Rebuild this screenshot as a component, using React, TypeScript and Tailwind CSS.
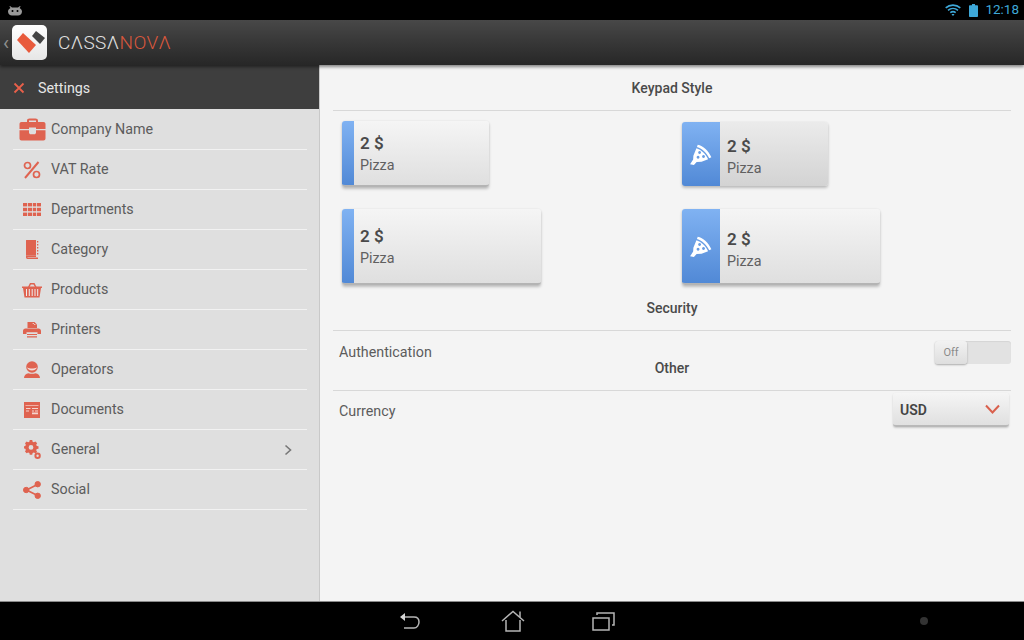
import React from 'react'

const menu = [
  { label: 'Company Name', icon: 'briefcase' },
  { label: 'VAT Rate', icon: 'percent' },
  { label: 'Departments', icon: 'grid' },
  { label: 'Category', icon: 'book' },
  { label: 'Products', icon: 'basket' },
  { label: 'Printers', icon: 'printer' },
  { label: 'Operators', icon: 'operator' },
  { label: 'Documents', icon: 'document' },
  { label: 'General', icon: 'gears', more: true },
  { label: 'Social', icon: 'social' },
]

const MenuIcon = ({ name }: { name: string }) => {
  const c = '#df6350'
  if (name === 'briefcase')
    return (
      <svg width="27" height="23" viewBox="0 0 27 23" fill={c}>
        <path d="M8 4.500V2.800C8 1.300 9 .5 10.500 .5h6C18 .5 19 1.300 19 2.800V4.500h-2V2.500H10v2z" />
        <path d="M2.500 4h22c1.200 0 2 .8 2 2v5H17V9.500H10V11H.5V6c0-1.200.8-2 2-2z" />
        <path d="M.5 12.300H10V15l1 1.300h5L17 15v-2.700h9.500V20.500c0 1.200-.8 2-2 2h-22c-1.200 0-2-.8-2-2z" />
      </svg>
    )
  if (name === 'percent')
    return (
      <svg width="18" height="18" viewBox="0 0 18 18" fill="none" stroke={c} strokeWidth="1.700">
        <path d="M15.500 1 2 17" strokeWidth="2" />
        <circle cx="4.500" cy="4.500" r="3" />
        <circle cx="13.500" cy="13.500" r="3" />
      </svg>
    )
  if (name === 'grid')
    return (
      <svg width="18" height="13" viewBox="0 0 18 13" fill={c}>
        {[0, 4.800, 9.600].map((y) =>
          [0, 5, 10, 14].map((x) => <rect key={`${x}-${y}`} x={x} y={y} width={x === 14 ? 4 : x === 10 ? 3.200 : 4.200} height="3.400" />),
        )}
      </svg>
    )
  if (name === 'book')
    return (
      <svg width="14" height="19" viewBox="0 0 14 19" fill={c}>
        <path d="M1.500 0H11v15.500H2.200c-.7 0-1.200.4-1.200.9V1C1 .5 1 0 1.500 0z" />
        <path d="M1 16.300c0-.5.5-.7 1.200-.7H11V17H2.500v.4H13V19H2.500C1.500 19 1 18 1 17z" />
        <path d="M12 1h1.300v1.500H12zM12 4h1.300v1.500H12zM12 7h1.300v1.500H12zM12 10h1.300v1.500H12zM12 13h1.300v1.500H12z" />
      </svg>
    )
  if (name === 'basket')
    return (
      <svg width="20" height="16" viewBox="0 0 20 16" fill={c}>
        <path d="M6 5 8 1h4.500l2 4h-1.500l-1.500-2.600H8.900L7.500 5z" />
        <path d="M0 4.500h20V6h-1l-1.500 9.500h-15L1 6H0z" />
        <path d="M4.500 7v7M7.300 7v7M10.200 7v7M13 7v7M15.700 7v7" stroke="#eeeeee" strokeWidth="1" />
      </svg>
    )
  if (name === 'printer')
    return (
      <svg width="18" height="16" viewBox="0 0 18 16" fill={c}>
        <path d="M5 0h6.500L14 2.500V6H4.500V.5z" />
        <path d="M9 1h2v2h2z" fill="#eeeeee" />
        <path d="M2.500 6.500h13c1.500 0 2.500 1 2.500 2.500v3h-3.500v-1.800h-11V12H0V9c0-1.500 1-2.500 2.500-2.500z" />
        <path d="M4 12h10v1H4zM4 14.300h10V15.600H4z" />
      </svg>
    )
  if (name === 'operator')
    return (
      <svg width="16" height="17" viewBox="0 0 16 17" fill={c}>
        <circle cx="8" cy="6" r="5.800" />
        <path d="M3 6.300c1.600 1 3.200 1.300 5 1.300s3.400-.3 5-1.300c-.4 2-2.600 3.200-5 3.200S3.400 8.300 3 6.300z" fill="#f6dcd7" />
        <path d="M0 17c0-2.700 2-4.300 4.500-4.800 2 .7 5 .7 7 0 2.500.5 4.500 2.100 4.500 4.800z" />
      </svg>
    )
  if (name === 'document')
    return (
      <svg width="16" height="16" viewBox="0 0 16 16" fill={c}>
        <path d="M0 0h16v16H0z" />
        <path d="M1.500 3h13v.8h-13z" fill="#f3c4bb" />
        <path d="M2 6h4.500v1H2zM2 8.500h3v1H2zM8 6h6v1H8zM8 8.500h2v1H8zM11 8.500h3v1h-3zM8 10.500h6v1.800H8z" fill="#f5d5cf" />
      </svg>
    )
  if (name === 'gears')
    return (
      <svg width="17" height="19" viewBox="0 0 17 19" fill={c}>
        <path
          fillRule="evenodd"
          d="M5 0h2.600l.4 1.800 1.300.6L11 1.500l1.800 1.800-1 1.600.6 1.300 1.800.4v2.600l-1.800.4-.6 1.300 1 1.600L11 14l-1.700-.9-1.300.6-.4 1.800H5l-.4-1.800-1.300-.6-1.600.9L0 12.200l.9-1.600-.6-1.300L-1 8.900V6.600l1.300-.4.6-1.300-.9-1.600L1.700 1.500l1.600.9 1.300-.6zM6.300 5.300a2.500 2.500 0 1 0 0 5 2.500 2.500 0 0 0 0-5z"
          transform="translate(1 0) scale(.95)"
        />
        <path
          fillRule="evenodd"
          d="M13.600 12.500a3.200 3.200 0 1 1 0 6.400 3.200 3.200 0 0 1 0-6.400zm0 2a1.200 1.200 0 1 0 0 2.400 1.200 1.200 0 0 0 0-2.400z"
        />
      </svg>
    )
  return (
    <svg width="18" height="18" viewBox="0 0 18 18" fill={c} stroke={c}>
      <path d="M14.500 3.500 3.500 9l11 5.500" fill="none" strokeWidth="1.700" />
      <circle cx="14.700" cy="3.200" r="2.700" />
      <circle cx="3.200" cy="9" r="2.700" />
      <circle cx="14.700" cy="14.800" r="2.700" />
    </svg>
  )
}

const PizzaIcon = () => (
  <svg width="24" height="24" viewBox="0 0 22 22" fill="#ffffff">
    <path d="M8 2.500C13 3.500 18 8 20.500 14l-2 1C16.500 10.500 12.500 6 7.300 4.600z" />
    <path
      fillRule="evenodd"
      d="M6.800 5.800C11 7 15.500 11 17.500 15.800l-6 2.200-4.500.3-2.500 2.700L1 20.500l2.800-4.500.2-3.500zM9.700 8.300a1.300 1.300 0 1 0 .01 0zM13.300 12a1.300 1.300 0 1 0 .01 0zM8.300 12.700a1.300 1.300 0 1 0 .01 0z"
    />
  </svg>
)

const KeyCard = ({ wide, icon, flat }: { wide?: boolean; icon?: boolean; flat?: boolean }) => (
  <div
    className={`flex overflow-hidden rounded-[3px] shadow-[0_2px_3px_rgba(0,0,0,0.22),0_0_2px_rgba(0,0,0,0.08)] ${
      flat
        ? 'bg-gradient-to-b from-[#ebebeb] to-[#d3d3d3]'
        : 'border-b-2 border-[#b4b4b4] bg-gradient-to-b from-[#f5f5f5] to-[#dfdfdf]'
    } ${wide ? 'h-[76px]' : icon ? 'h-[64px]' : 'h-[66px]'} ${wide ? (icon ? 'w-[198px]' : 'w-[199px]') : icon ? 'w-[146px]' : 'w-[147px]'}`}
  >
    <div
      className={`flex shrink-0 items-center justify-center bg-gradient-to-b from-[#80b2f2] to-[#5189d6] ${
        icon ? 'w-[38px]' : 'w-[12px]'
      }`}
    >
      {icon && <PizzaIcon />}
    </div>
    <div className={`flex flex-col justify-center ${flat ? 'pl-[7px] pt-[6px]' : icon ? 'pl-[7px] pt-[8px]' : 'pl-[6px] pt-[2px]'}`}>
      <div className="text-[17px] leading-[22px] font-semibold text-[#4a4a4a]">2 $</div>
      <div className="text-[14.300px] leading-[22px] text-[#606060]">Pizza</div>
    </div>
  </div>
)

const SectionTitle = ({ children }: { children: React.ReactNode }) => (
  <div className="border-b border-[#d8d8d8] pb-[12px] text-center text-[14px] leading-5 font-medium text-[#4a4a4a]">
    {children}
  </div>
)

export default function App() {
  return (
    <div className="flex h-[640px] w-[1024px] flex-col overflow-hidden bg-black font-['Roboto',sans-serif]">
      {/* status bar */}
      <div className="flex h-[20px] shrink-0 items-center justify-between pr-[5px] pl-[8px]">
        <svg width="14" height="11" viewBox="0 0 14 11" fill="#9a9a9a">
          <path d="M2 1 4 2.500h6L12 1l.6.6L11.500 3c1.500.8 2.500 2 2.500 3.500C14 9 12 10.500 10 10.500H4C2 10.500 0 9 0 6.500 0 5 1 3.800 2.500 3L1.400 1.600z" />
          <circle cx="4.500" cy="6" r="1" fill="#000" />
          <circle cx="9.500" cy="6" r="1" fill="#000" />
        </svg>
        <div className="flex items-center">
          <svg width="16" height="12" viewBox="0 0 16 12" fill="none" stroke="#3ea8d8" strokeWidth="1.600">
            <path d="M.7 3.800C4.800.2 11.200.2 15.300 3.800" />
            <path d="M3 6.300c2.900-2.400 7.100-2.400 10 0" />
            <path d="M5.300 8.600c1.600-1.200 3.800-1.200 5.400 0" />
            <path d="M8 12 6.500 10.300c.9-.5 2.100-.5 3 0z" fill="#3ea8d8" stroke="none" />
          </svg>
          <svg className="ml-[8px]" width="9" height="13" viewBox="0 0 9 13" fill="#3ea8d8">
            <path d="M3 0h3v1.300h2.200c.5 0 .8.300.8.800v10.100c0 .5-.3.800-.8.800H.8c-.5 0-.8-.3-.8-.8V2.100c0-.5.300-.8.800-.8H3z" />
          </svg>
          <span className="ml-[7px] text-[13.500px] leading-none text-[#3ea8d8]">12:18</span>
        </div>
      </div>

      {/* action bar */}
      <div className="z-10 flex h-[45px] shrink-0 items-center bg-gradient-to-b from-[#484848] to-[#272727] shadow-[0_2px_3px_rgba(0,0,0,0.45)]">
        <span className="ml-[3px] w-[9px] text-[20px] leading-none text-[#8f8f8f]">‹</span>
        <div className="flex h-[35px] w-[35px] items-center justify-center rounded-[5px] bg-gradient-to-b from-white to-[#e6e6e6]">
          <svg width="35" height="35" viewBox="0 0 35 35">
            <path d="M24 6 33 13 28 19 20 11z" fill="#444444" />
            <path d="M5 15 11 8 24 20 17 28z" fill="#e85a3c" />
          </svg>
        </div>
        <div className="ml-[11px] text-[19px] leading-none font-light tracking-[0.4px]">
          <span className="text-[#e0e0e0]">CΛSSΛ</span>
          <span className="text-[#d9573c]">NOVΛ</span>
        </div>
      </div>

      <div className="flex min-h-0 flex-1">
        {/* sidebar */}
        <div className="flex w-[320px] shrink-0 flex-col border-r border-[#c9c9c9] bg-[#dfdfdf]">
          <div className="flex h-[44px] shrink-0 items-center bg-[#3e3e3e] pt-px pl-[13px]">
            <svg width="12" height="12" viewBox="0 0 12 12" stroke="#e8604a" strokeWidth="1.800">
              <path d="M1.500 1.500l9 9M10.500 1.500l-9 9" />
            </svg>
            <span className="ml-[13px] pt-[2px] text-[14.300px] text-[#e6e6e6]">Settings</span>
          </div>
          <div className="pt-px pr-[12px] pl-[13px]">
            {menu.map((m) => (
              <div key={m.label} className="flex h-[40px] items-center border-b border-[#f2f2f2]">
                <div className="flex w-[38px] shrink-0 justify-center">
                  <MenuIcon name={m.icon} />
                </div>
                <span className="pt-px text-[14.300px] text-[#5c5c5c]">{m.label}</span>
                {m.more && (
                  <svg className="mr-[15px] ml-auto" width="8" height="12" viewBox="0 0 8 12" fill="none" stroke="#777777" strokeWidth="1.600">
                    <path d="M1.500 1.500 6.500 6l-5 4.500" />
                  </svg>
                )}
              </div>
            ))}
          </div>
        </div>

        {/* settings panel */}
        <div className="min-w-0 flex-1 bg-[#f4f4f4] pt-[13px] pr-[13px] pl-[13px]">
          <SectionTitle>Keypad Style</SectionTitle>
          <div className="grid grid-cols-[340px_340px] gap-y-[22px] pt-[10px] pl-[9px]">
            <KeyCard />
            <div className="pt-px">
              <KeyCard icon flat />
            </div>
            <KeyCard wide />
            <KeyCard wide icon />
          </div>

          <div className="mt-[13px]">
            <SectionTitle>Security</SectionTitle>
          </div>
          <div className="flex h-[27px] items-start justify-between pt-[10px] pl-[6px] text-[14.300px] leading-5 text-[#5c5c5c]">
            <span className="pt-px">Authentication</span>
            <div className="flex h-[23px] w-[76px] rounded-[3px] bg-[#e2e2e2] shadow-[inset_0_1px_1px_rgba(0,0,0,0.06)]">
              <div className="flex h-[23px] w-[32px] items-center justify-center rounded-[3px] bg-gradient-to-b from-[#f2f2f2] to-[#dedede] text-[11px] text-[#8a8a8a] shadow-[0_1px_2px_rgba(0,0,0,0.3)]">
                Off
              </div>
            </div>
          </div>

          <SectionTitle>Other</SectionTitle>
          <div className="flex items-start justify-between pt-[2px] pr-[2px] pl-[6px]">
            <span className="pt-[8px] text-[14.300px] leading-5 text-[#5c5c5c]">Currency</span>
            <div className="flex h-[34px] w-[116px] items-center justify-between rounded-[3px] border-b-2 border-[#b8b8b8] bg-gradient-to-b from-[#f5f5f5] to-[#e0e0e0] pr-[9px] pl-[7px] shadow-[0_1px_2px_rgba(0,0,0,0.18)]">
              <span className="pt-[2px] text-[14px] font-semibold text-[#444444]">USD</span>
              <svg width="15" height="10" viewBox="0 0 15 10" fill="none" stroke="#d9604d" strokeWidth="2">
                <path d="M1 1.500 7.500 8.500 14 1.500" />
              </svg>
            </div>
          </div>
        </div>
      </div>

      {/* navigation bar */}
      <div className="relative flex h-[39px] shrink-0 items-center border-t border-[#8a8a8a] pl-[399px]">
        <svg width="23" height="20" viewBox="0 0 23 20" fill="none" stroke="#b5b5b5" strokeWidth="1.500">
          <path d="M6 6h9c3 0 5 2 5 5s-2 6-5 6H5" />
          <path d="M6 2v8L1 6z" fill="#d5d5d5" stroke="none" />
        </svg>
        <svg className="ml-[79px]" width="24" height="22" viewBox="0 0 24 22" fill="none" stroke="#b5b5b5" strokeWidth="1.500">
          <path d="M1 11 12 1.500 23 11" />
          <path d="M5 10v11h14V10M19 7V1.500" />
        </svg>
        <svg className="ml-[67px]" width="23" height="19" viewBox="0 0 23 19" fill="none" stroke="#b5b5b5" strokeWidth="1.500">
          <path d="M1 6h16v12H1z" />
          <path d="M5 3V1h17v12h-2" />
        </svg>
        <div className="absolute top-[15px] left-[920px] h-[8px] w-[8px] rounded-full bg-[#333333]" />
      </div>
    </div>
  )
}
